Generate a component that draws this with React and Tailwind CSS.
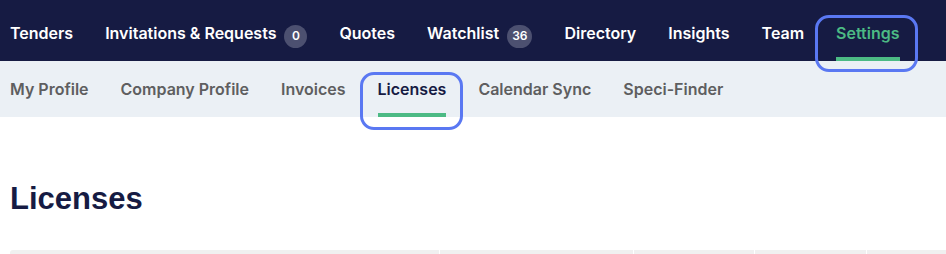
import React from "react";

const topItems = [
  { label: "Tenders" },
  { label: "Invitations & Requests", badge: "0" },
  { label: "Quotes" },
  { label: "Watchlist", badge: "36" },
  { label: "Directory" },
  { label: "Insights" },
  { label: "Team" },
  { label: "Settings", active: true },
];

const subItems = [
  { label: "My Profile" },
  { label: "Company Profile" },
  { label: "Invoices" },
  { label: "Licenses", active: true },
  { label: "Calendar Sync" },
  { label: "Speci-Finder" },
];

function TopItem({ label, badge, active }) {
  return (
    <div className="relative flex items-center pt-[4px]">
      <span className={active ? "text-[#4cba84]" : "text-white"}>{label}</span>
      {badge && (
        <span className="ml-2 mt-[7px] flex h-[23px] min-w-[23px] items-center justify-center rounded-full bg-[#4c5070] px-[5px] text-[12px] font-semibold text-white">
          {badge}
        </span>
      )}
      {active && (
        <>
          <div className="absolute bottom-0 left-0 right-0 h-[4px] bg-[#4cba84]" />
          <div className="absolute left-[-21px] right-[-18px] top-[15px] z-10 h-[57px] rounded-[14px] border-[3px] border-[#5a78f2]" />
        </>
      )}
    </div>
  );
}

function SubItem({ label, active }) {
  return (
    <div className="relative flex items-center">
      <span className={active ? "text-[#161b43]" : "text-[#5e5e60]"}>{label}</span>
      {active && (
        <>
          <div className="absolute bottom-0 left-0 right-0 h-[4px] bg-[#4cba84]" />
          <div className="absolute left-[-18px] right-[-17px] top-[11px] z-10 h-[58px] rounded-[14px] border-[3px] border-[#5a78f2]" />
        </>
      )}
    </div>
  );
}

export default function App() {
  return (
    <div className="h-[254px] w-[946px] overflow-hidden bg-white font-['Inter',sans-serif]">
      <nav className="relative z-10 flex h-[61px] gap-8 bg-[#161b43] pl-[10px] text-[16px] font-semibold">
        {topItems.map((item) => (
          <TopItem key={item.label} {...item} />
        ))}
      </nav>
      <div className="flex h-[56px] gap-8 bg-[#ebf0f5] pl-[10px] text-[16px] font-semibold">
        {subItems.map((item) => (
          <SubItem key={item.label} {...item} />
        ))}
      </div>
      <h1 className="mt-[64px] pl-[10px] font-['Liberation_Sans',Arial,sans-serif] text-[31px] font-bold leading-[36px] text-[#161b43]">
        Licenses
      </h1>
      <div className="ml-[10px] mt-[33px] flex h-[10px] gap-px">
        <div className="w-[429px] rounded-tl-[3px] bg-[#f0f0f0]" />
        <div className="w-[193px] bg-[#f0f0f0]" />
        <div className="w-[120px] bg-[#f0f0f0]" />
        <div className="w-[111px] bg-[#f0f0f0]" />
        <div className="flex-1 bg-[#f0f0f0]" />
      </div>
    </div>
  );
}
